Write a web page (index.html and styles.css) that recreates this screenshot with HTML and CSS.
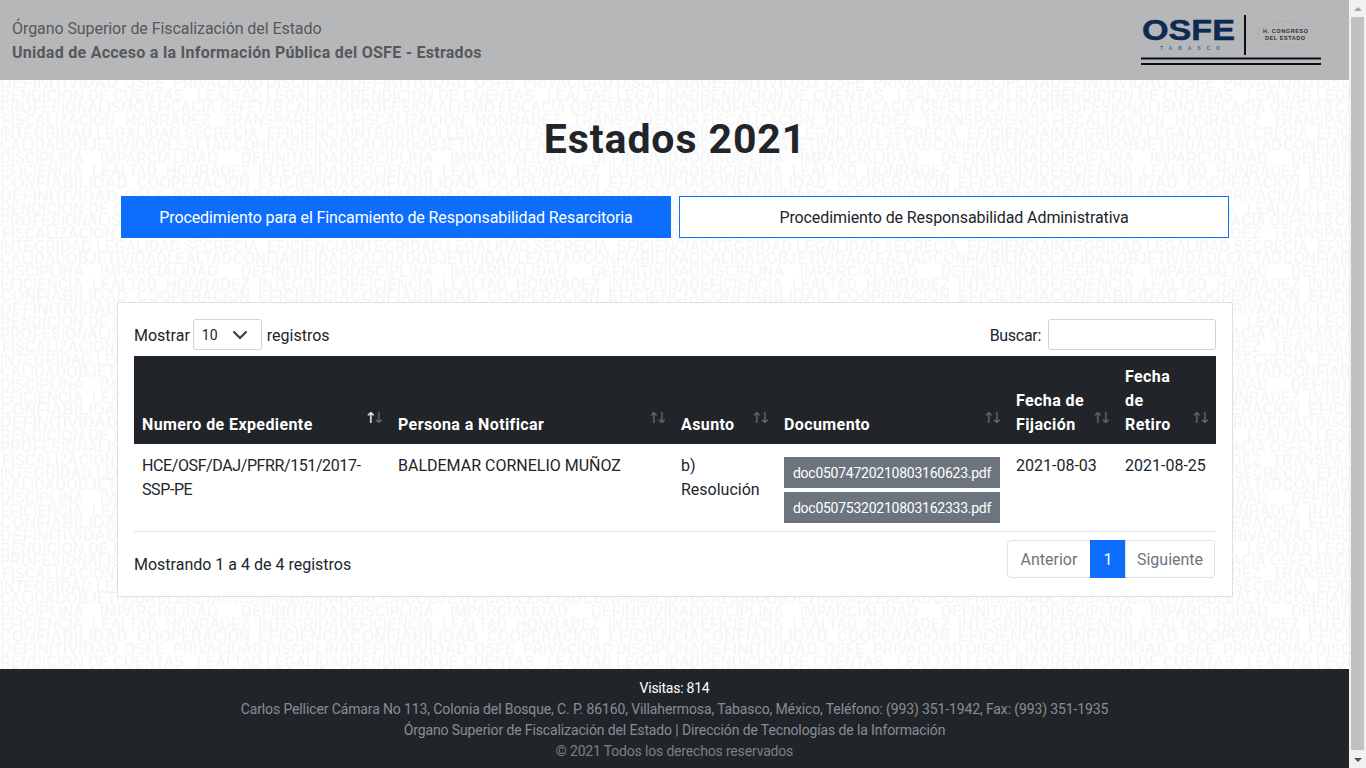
FILE: index.html
```html
<!DOCTYPE html>
<html lang="es">
<head>
<meta charset="utf-8">
<title>Estrados 2021</title>
<link rel="stylesheet" href="styles.css">
</head>
<body>
<div class="app">
  <div class="page">
    <header class="topbar">
      <div class="topbar-text">
        <div class="org">Órgano Superior de Fiscalización del Estado</div>
        <div class="unit">Unidad de Acceso a la Información Pública del OSFE - Estrados</div>
      </div>
      <svg class="logo" width="180" height="52" viewBox="0 0 180 52">
        <text class="logo-osfe" x="1" y="26" textLength="93" lengthAdjust="spacingAndGlyphs">OSFE</text>
        <text class="logo-tab" x="19" y="36" textLength="60">TABASCO</text>
        <rect x="103" y="1" width="2" height="40" fill="#0c0f14"/>
        <path class="logo-map" d="M116 16l8-4 9-2 9-3 8 2 10 2 6 2 9 8-3 7-7 4-9-1-6 3-8-1-6-5-8 3-8-4-4-7z"/>
        <text class="logo-cong" x="122" y="18.5" textLength="45">H. CONGRESO</text>
        <text class="logo-cong" x="124" y="25.5" textLength="40">DEL ESTADO</text>
        <rect x="0" y="43.5" width="180" height="2" fill="#0c0f14"/>
        <rect x="0" y="49" width="180" height="2" fill="#0c0f14"/>
      </svg>
    </header>

    <main class="content">
      <svg class="watermark" aria-hidden="true" width="100%" height="100%">
        <defs>
          <pattern id="tile" width="350" height="113.3" patternUnits="userSpaceOnUse">
            <text x="0" y="8" textLength="118" lengthAdjust="spacingAndGlyphs">DEFINITIVIDAD</text>
            <text x="124" y="8" textLength="41" lengthAdjust="spacingAndGlyphs">OSFE</text>
            <text x="173" y="8" textLength="90" lengthAdjust="spacingAndGlyphs">PRIVACIDAD</text>
            <text x="266" y="8" textLength="84" lengthAdjust="spacingAndGlyphs">DISCIPLINA</text>
            <text x="0" y="20.5" textLength="184" lengthAdjust="spacingAndGlyphs">RENDICION DE CUENTAS</text>
            <text x="197" y="20.5" textLength="65" lengthAdjust="spacingAndGlyphs">LEALTAD</text>
            <text x="266" y="20.5" textLength="84" lengthAdjust="spacingAndGlyphs">LEGALIDAD</text>
            <text x="0" y="33" textLength="145" lengthAdjust="spacingAndGlyphs">PROFESIONALISMO</text>
            <text x="148" y="33" textLength="68" lengthAdjust="spacingAndGlyphs">EFICACIA</text>
            <text x="220" y="33" textLength="63" lengthAdjust="spacingAndGlyphs">OSFETAB</text>
            <text x="285" y="33" textLength="65" lengthAdjust="spacingAndGlyphs">CALIDAD</text>
            <text x="2" y="46" textLength="113" lengthAdjust="spacingAndGlyphs">FISCALIZACION</text>
            <text x="125" y="46" textLength="86" lengthAdjust="spacingAndGlyphs">HONRADEZ</text>
            <text x="223" y="46" textLength="127" lengthAdjust="spacingAndGlyphs">TRANSPARENCIA</text>
            <text x="0" y="58.7" textLength="92" lengthAdjust="spacingAndGlyphs">INTEGRIDAD</text>
            <text x="96" y="58.7" textLength="84" lengthAdjust="spacingAndGlyphs">LEGALIDAD</text>
            <text x="184" y="58.7" textLength="74" lengthAdjust="spacingAndGlyphs">SECRECIA</text>
            <text x="267" y="58.7" textLength="83" lengthAdjust="spacingAndGlyphs">EFICIENCIA</text>
            <text x="0" y="71" textLength="66" lengthAdjust="spacingAndGlyphs">CALIDAD</text>
            <text x="66" y="71" textLength="101" lengthAdjust="spacingAndGlyphs">OBJETIVIDAD</text>
            <text x="167" y="71" textLength="65" lengthAdjust="spacingAndGlyphs">LEALTAD</text>
            <text x="233" y="71" textLength="117" lengthAdjust="spacingAndGlyphs">CONFIABILIDAD</text>
            <text x="0" y="83.7" textLength="84" lengthAdjust="spacingAndGlyphs">DISCIPLINA</text>
            <text x="100" y="83.7" textLength="118" lengthAdjust="spacingAndGlyphs">IMPARCIALIDAD</text>
            <text x="241" y="83.7" textLength="109" lengthAdjust="spacingAndGlyphs">DEFINITIVIDAD</text>
            <text x="0" y="96.3" textLength="83" lengthAdjust="spacingAndGlyphs">EFICIENCIA</text>
            <text x="92" y="96.3" textLength="65" lengthAdjust="spacingAndGlyphs">LEALTAD</text>
            <text x="166" y="96.3" textLength="84" lengthAdjust="spacingAndGlyphs">HONRADEZ</text>
            <text x="258" y="96.3" textLength="92" lengthAdjust="spacingAndGlyphs">INTEGRIDAD</text>
            <text x="0" y="108.7" textLength="128" lengthAdjust="spacingAndGlyphs">CONFIABILIDAD</text>
            <text x="137" y="108.7" textLength="113" lengthAdjust="spacingAndGlyphs">COOPERACION</text>
            <text x="258" y="108.7" textLength="92" lengthAdjust="spacingAndGlyphs">EFICIENCIA</text>
            <text x="0" y="121.3" textLength="118" lengthAdjust="spacingAndGlyphs">DEFINITIVIDAD</text>
            <text x="124" y="121.3" textLength="41" lengthAdjust="spacingAndGlyphs">OSFE</text>
            <text x="173" y="121.3" textLength="90" lengthAdjust="spacingAndGlyphs">PRIVACIDAD</text>
            <text x="266" y="121.3" textLength="84" lengthAdjust="spacingAndGlyphs">DISCIPLINA</text>
          </pattern>
        </defs>
        <rect width="100%" height="100%" fill="url(#tile)"/>
      </svg>

      <div class="container">
        <h1 class="title">Estados 2021</h1>
        <div class="tabs">
          <a class="tab tab-primary" href="#">Procedimiento para el Fincamiento de Responsabilidad Resarcitoria</a>
          <a class="tab tab-outline" href="#">Procedimiento de Responsabilidad Administrativa</a>
        </div>

        <section class="card">
          <div class="tools">
            <label class="length"><span class="lbl">Mostrar</span>
              <select class="select"><option>10</option><option>25</option><option>50</option></select>
              <span class="lbl">registros</span></label>
            <label class="search"><span class="lbl lbl-search">Buscar:</span>
              <input class="input" type="search"></label>
          </div>

          <table class="grid">
            <colgroup>
              <col class="c1"><col class="c2"><col class="c3"><col class="c4"><col class="c5"><col class="c6">
            </colgroup>
            <thead>
              <tr>
                <th class="sort sort-active">Numero de Expediente</th>
                <th class="sort">Persona a Notificar</th>
                <th class="sort">Asunto</th>
                <th class="sort">Documento</th>
                <th class="sort">Fecha de Fijación</th>
                <th class="sort">Fecha de Retiro</th>
              </tr>
            </thead>
            <tbody>
              <tr>
                <td class="expediente">HCE/OSF/DAJ/PFRR/151/2017-SSP-PE</td>
                <td>BALDEMAR CORNELIO MUÑOZ</td>
                <td>b) Resolución</td>
                <td class="doc-cell">
                  <div class="docs">
                    <a class="doc" href="#">doc05074720210803160623.pdf</a>
                    <a class="doc" href="#">doc05075320210803162333.pdf</a>
                  </div>
                </td>
                <td>2021-08-03</td>
                <td>2021-08-25</td>
              </tr>
            </tbody>
          </table>

          <div class="foot-row">
            <div class="info">Mostrando 1 a 4 de 4 registros</div>
            <ul class="pager">
              <li class="pg pg-first">Anterior</li>
              <li class="pg pg-active">1</li>
              <li class="pg pg-last">Siguiente</li>
            </ul>
          </div>
        </section>
      </div>
    </main>

    <footer class="footer">
      <div class="visits">Visitas: 814</div>
      <div class="muted">Carlos Pellicer Cámara No 113, Colonia del Bosque, C. P. 86160, Villahermosa, Tabasco, México, Teléfono: (993) 351-1942, Fax: (993) 351-1935</div>
      <div class="muted">Órgano Superior de Fiscalización del Estado | Dirección de Tecnologías de la Información</div>
      <div class="copy">© 2021 Todos los derechos reservados</div>
    </footer>
  </div>

  <div class="scrollbar" aria-hidden="true">
    <div class="sb-btn"><span class="sb-up"></span></div>
    <div class="sb-thumb"></div>
    <div class="sb-btn"><span class="sb-down"></span></div>
  </div>
</div>
</body>
</html>
```
FILE: styles.css
```css
* { box-sizing: border-box; }
html, body { margin: 0; padding: 0; height: 100%; overflow: hidden; }
body {
  font-family: Roboto, "Open Sans", sans-serif;
  font-size: 16px;
  line-height: 24px;
  color: #212529;
  background: #fff;
}
.app { display: flex; width: 1366px; height: 768px; overflow: hidden; }
.page { width: 1349px; height: 768px; display: flex; flex-direction: column; }

.topbar {
  flex: 0 0 80px;
  display: flex;
  justify-content: space-between;
  align-items: flex-start;
  padding: 17px 28px 0 12px;
  background: #b6b7b9;
  color: #57585b;
}
.org { letter-spacing: -.07px; }
.unit { font-weight: 700; letter-spacing: .27px; }
.logo { display: block; margin-top: -3px; }
.logo-osfe { font: 700 29px "Liberation Sans", sans-serif; fill: #0e2a50; stroke: #0e2a50; stroke-width: .5; }
.logo-tab { font: 700 5px "Liberation Sans", sans-serif; fill: #3f6fa8; }
.logo-cong { font: 700 5.5px "Liberation Sans", sans-serif; fill: #2b2d30; }
.logo-map { fill: none; stroke: #a9aaac; stroke-width: .6; }

.content { flex: 1; position: relative; min-height: 0; overflow: hidden; }
.watermark { position: absolute; left: 0; top: 0; }
.watermark text { font: 700 16px "Liberation Sans", sans-serif; fill: #f6f6f7; }
.container { position: relative; width: 1116px; margin: 0 116px 0 117px; padding-top: 35px; }
.title {
  margin: 0 0 33px;
  font-size: 41px;
  line-height: 48px;
  font-weight: 700;
  letter-spacing: .9px;
  text-align: center;
}
.tabs { display: flex; gap: 8px; padding: 0 4px; margin-bottom: 64px; }
.tab {
  flex: 0 0 550px;
  height: 42px;
  padding-top: 2px;
  display: flex;
  align-items: center;
  justify-content: center;
  text-decoration: none;
  letter-spacing: -.1px;
  border: 1px solid #0d6efd;
}
.tab-primary { background: #0d6efd; color: #fff; }
.tab-outline { background: #fff; color: #212529; }

.card {
  background: #fff;
  border: 1px solid #dfdfdf;
  height: 295px;
  padding: 16px;
}
.tools { display: flex; justify-content: space-between; align-items: center; height: 31px; margin-bottom: 6px; }
.length, .search { display: flex; align-items: center; gap: 4px; }
.search { gap: 7px; }
.lbl { padding-top: 2px; }
.lbl-search { letter-spacing: -.3px; }
.select {
  appearance: none;
  width: 69px;
  height: 31px;
  margin: 0 1px 0 -1px;
  padding: 2px 8px 0;
  font: 14px/21px Roboto, sans-serif;
  color: #212529;
  border: 1px solid #ced4da;
  border-radius: 3px;
  background: #fff url("data:image/svg+xml,%3Csvg xmlns='http://www.w3.org/2000/svg' viewBox='0 0 16 16'%3E%3Cpath fill='none' stroke='%23343a40' stroke-linecap='round' stroke-linejoin='round' stroke-width='2' d='M2 5l6 6 6-6'/%3E%3C/svg%3E") no-repeat right 13px center / 16px 16px;
}
.input {
  width: 168px;
  height: 31px;
  border: 1px solid #ced4da;
  border-radius: 3px;
  background: #fff;
}

.grid { width: 1082px; table-layout: fixed; border-collapse: collapse; }
.c1 { width: 256px; }
.c2 { width: 283px; }
.c3 { width: 103px; }
.c4 { width: 232px; }
.c5 { width: 109px; }
.c6 { width: 99px; }
.grid th {
  position: relative;
  height: 88px;
  padding: 9px 30px 7px 8px;
  background: #212529;
  color: #fff;
  font-weight: 700;
  letter-spacing: .4px;
  text-align: left;
  vertical-align: bottom;
}
.sort::before, .sort::after {
  position: absolute;
  bottom: 14px;
  font: 400 15px/24px "DejaVu Sans", sans-serif;
  letter-spacing: 0;
  color: #fff;
  opacity: .3;
}
.sort::before { content: "\2191"; right: 13px; }
.sort::after { content: "\2193"; right: 5px; }
.sort-active::before { opacity: 1; }
.grid td {
  height: 87px;
  padding: 10px 8px 6px;
  vertical-align: top;
  border-bottom: 1px solid #dee2e6;
  overflow-wrap: anywhere;
}
.grid .doc-cell { padding: 8px; }
.grid .expediente { letter-spacing: -.4px; }
.docs { display: flex; flex-direction: column; gap: 4px; padding-top: 5px; }
.doc {
  height: 31px;
  width: 216px;
  display: flex;
  align-items: center;
  justify-content: center;
  background: #6c757d;
  color: #fff;
  font-size: 14px;
  letter-spacing: -.25px;
  text-decoration: none;
}

.foot-row { display: flex; justify-content: space-between; padding: 8px 1px 0 0; }
.info { padding-top: 13px; }
.pager { display: flex; margin: 0; padding: 0; list-style: none; color: #6c757d; }
.pg {
  height: 38px;
  padding-top: 2px;
  display: flex;
  align-items: center;
  justify-content: center;
  border: 1px solid #dee2e6;
  margin-left: -1px;
}
.pg-first { width: 84px; border-radius: 4px 0 0 4px; }
.pg-active { width: 36px; background: #0d6efd; border-color: #0d6efd; color: #fff; }
.pg-last { width: 90px; border-radius: 0 4px 4px 0; }

.footer {
  flex: 0 0 99px;
  padding-top: 9px;
  background: #212529;
  color: #868e96;
  font-size: 14px;
  line-height: 21px;
  text-align: center;
}
.visits { color: #fff; letter-spacing: -.25px; }
.muted { letter-spacing: -.12px; }
.copy { color: #7a8086; letter-spacing: -.17px; }

.scrollbar {
  flex: 0 0 17px;
  display: flex;
  flex-direction: column;
  align-items: center;
  background: #f1f1f1;
}
.sb-btn { flex: 0 0 17px; display: flex; align-items: center; justify-content: center; }
.sb-thumb { width: 13px; flex: 0 0 733px; background: #c1c1c1; margin-bottom: 1px; }
.sb-up, .sb-down { width: 0; height: 0; border-left: 4px solid transparent; border-right: 4px solid transparent; }
.sb-up { border-bottom: 4px solid #a3a3a3; }
.sb-down { border-top: 4px solid #505050; }
```
